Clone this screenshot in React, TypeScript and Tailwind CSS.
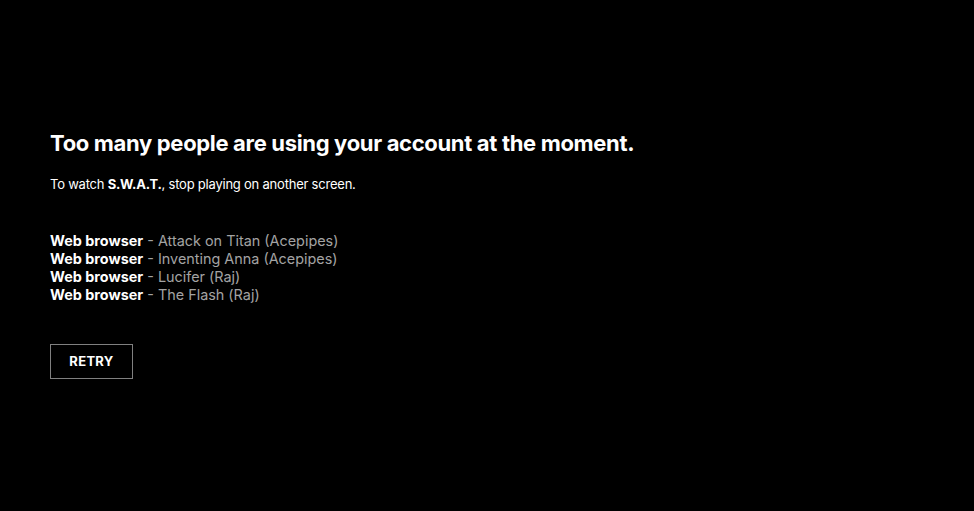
import React from 'react';

const sessions = [
  { device: 'Web browser', title: 'Attack on Titan (Acepipes)' },
  { device: 'Web browser', title: 'Inventing Anna (Acepipes)' },
  { device: 'Web browser', title: 'Lucifer (Raj)' },
  { device: 'Web browser', title: 'The Flash (Raj)' },
];

const App: React.FC = () => {
  return (
    <div
      className="min-h-[511px] w-full bg-black text-white"
      style={{ fontFamily: 'Inter, "Liberation Sans", sans-serif' }}
    >
      <div className="px-[50px] pt-[128px]">
        <h1 className="text-[22px] font-bold leading-[30px] tracking-[-0.33px]">
          Too many people are using your account at the moment.
        </h1>
        <p className="mt-[17px] text-[13px] leading-[18px] tracking-[-0.22px]">
          To watch <span className="font-bold">S.W.A.T.</span>, stop playing on another screen.
        </p>

        <ul className="mt-[39px] text-[14.4px] leading-[18px]">
          {sessions.map((s, i) => (
            <li key={i}>
              <span className="font-bold">{s.device}</span>
              <span className="text-[#a3a3a3]"> - {s.title}</span>
            </li>
          ))}
        </ul>

        <button className="mt-[40px] h-[35px] w-[83px] border border-[#808080] text-[13px] font-bold tracking-[0.3px]">
          RETRY
        </button>
      </div>
    </div>
  );
};

export default App;
